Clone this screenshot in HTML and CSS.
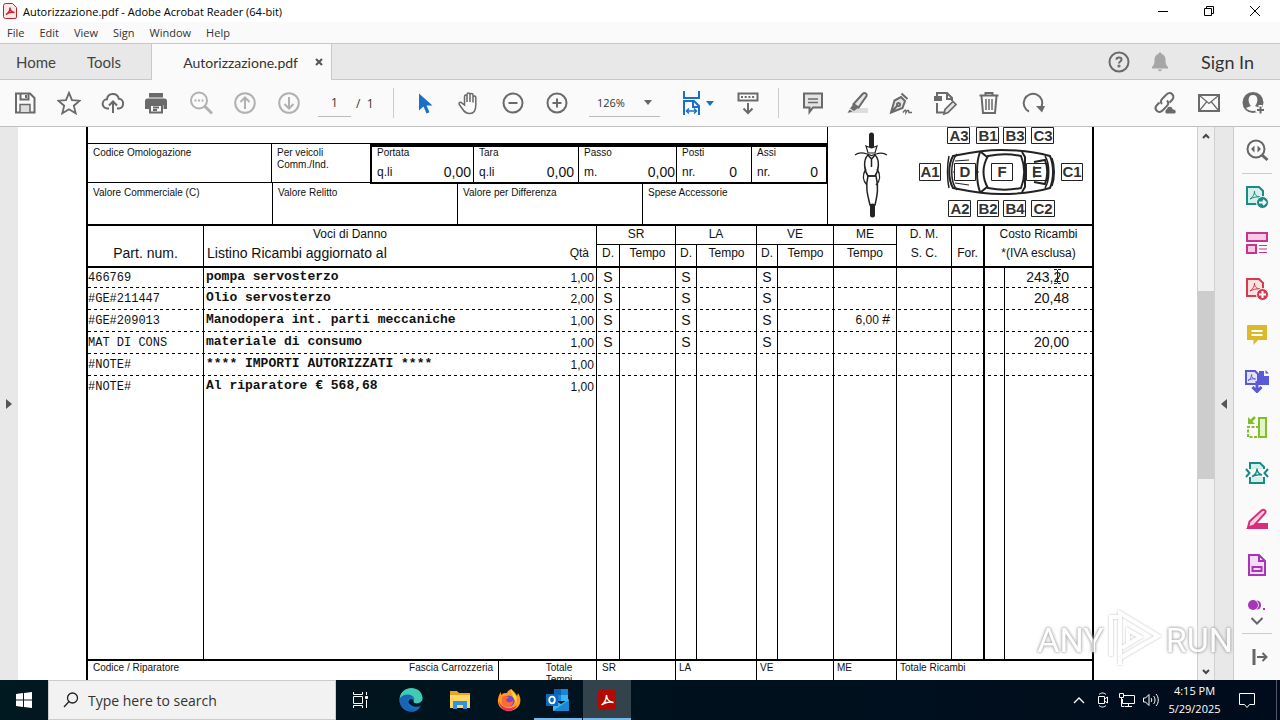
FILE: index.html
```html
<!DOCTYPE html>
<html lang="en">
  <head>
    <meta charset="UTF-8" />
    <meta name="viewport" content="width=device-width, initial-scale=1.0" />
    <title>Autorizzazione.pdf - Adobe Acrobat Reader (64-bit)</title>
    <link rel="stylesheet" href="styles.css">
  </head>
  <body>
    <!-- Title bar -->
    <header class="titlebar">
      <svg class="app-icon" width="14" height="16" viewBox="0 0 14 16"><path d="M2.500.500h7l4 4v9.500a1.500 1.500 0 0 1-1.500 1.500h-9.500a2 2 0 0 1-2-2v-11a2 2 0 0 1 2-2z" fill="#fbe9e9" stroke="#c4232b"/><path d="M3 11.500c2-1 4-4 4-7M7 5c0 2.500 2 4 4.500 4.500M3 11.500c2.500-2.500 5.500-2.700 8.500-2" fill="none" stroke="#d2232a" stroke-width="1.500"/></svg>
      <h1 class="title">Autorizzazione.pdf - Adobe Acrobat Reader (64-bit)</h1>
      <div class="window-buttons">
        <button aria-label="Minimize"><svg width="12" height="12"><path d="M1 6.500h10" stroke="#000"/></svg></button>
        <button aria-label="Restore"><svg width="12" height="12" fill="none" stroke="#000"><path d="M1.500 3.500h7v7h-7zM3.500 3.500v-2h7v7h-2"/></svg></button>
        <button aria-label="Close"><svg width="12" height="12"><path d="M1 1l10 10M11 1L1 11" stroke="#000"/></svg></button>
      </div>
    </header>

    <!-- Menu -->
    <nav class="menubar">
      <button>File</button>
      <button>Edit</button>
      <button>View</button>
      <button>Sign</button>
      <button>Window</button>
      <button>Help</button>
    </nav>

    <!-- Tabs -->
    <div class="tabs">
      <div class="tabs-home">
        <button>Home</button>
        <button>Tools</button>
      </div>
      <div class="tab-active">
        <span>Autorizzazione.pdf</span>
        <button aria-label="Close tab"><svg width="8" height="8"><path d="M1 1l6 6M7 1L1 7" stroke="#555" stroke-width="2"/></svg></button>
      </div>
      <div class="account">
        <button class="icon-button" aria-label="Help"><svg width="22" height="22" viewBox="0 0 22 22" fill="none" stroke="#6a6a6a" stroke-width="2"><circle cx="11" cy="11" r="9.500"/><path d="M8.500 8.800c0-3 5-3 5 0 0 1.800-2.500 1.700-2.500 3.700"/><circle cx="11" cy="15" r=".6"/></svg></button>
        <button class="icon-button" aria-label="Notifications"><svg width="20" height="22" viewBox="0 0 20 22" fill="#a6a6a6"><path d="M10 1.500c1 0 1.500.6 1.500 1.500 3 .8 4 3 4 6 0 4 .8 5.500 2.500 7v1.500H2V16c1.700-1.500 2.500-3 2.500-7 0-3 1-5.200 4-6 0-.9.500-1.500 1.500-1.500zM7.800 18.500h4.400c-.3 2.200-4.100 2.200-4.400 0z"/></svg></button>
        <button class="sign-in">Sign In</button>
      </div>
    </div>

    <!-- Toolbar -->
    <div class="toolbar">
      <div class="tool-group">
        <button class="tool" aria-label="Save"><svg viewBox="0 0 24 24"><path d="M3 2.500h14l4.500 4.500v14.500H3z"/><path d="M7.500 2.500v6h8v-6M13 4v3"/><path d="M7 21v-7.500h10V21" fill="#ddd" stroke-width="1.500"/></svg></button>
        <button class="tool" aria-label="Star"><svg viewBox="0 0 24 24"><path d="M12 1.800l3 7.300 7.800.6-6 5 1.900 7.600-6.700-4.100-6.700 4.100 1.900-7.600-6-5 7.800-.6z" stroke-width="1.800"/></svg></button>
        <button class="tool" aria-label="Upload"><svg viewBox="0 0 24 24"><path d="M8 17.500H6.500a4.600 4.600 0 0 1-.5-9.200c.5-7 10.500-7.200 11.800-.6 5.800.2 5.800 9.500-.3 9.800H16M12 22v-11M8 14.500l4-4 4 4"/></svg></button>
        <button class="tool" aria-label="Print"><svg viewBox="0 0 24 24" class="solid"><path d="M4 2h14v4.500H4zM2.500 7.500h17A2.500 2.500 0 0 1 22 10v8h-3.500v-4H4v4H0v-8a2.500 2.500 0 0 1 2.500-2.500z"/><path d="M5 14h12v7.500H5z" fill="#fafafa" stroke="#6a6a6a" stroke-width="2"/><path d="M8 16.500h6M8 19h4" stroke="#6a6a6a"/></svg></button>
        <button class="tool disabled" aria-label="Find"><svg viewBox="0 0 24 24"><circle cx="10" cy="9.500" r="8"/><path d="M16 15.500l7 7" stroke-width="3"/><path d="M5.500 9.500h9" stroke-dasharray="2 1.500"/></svg></button>
        <button class="tool disabled" aria-label="Previous page"><svg viewBox="0 0 24 24"><circle cx="12" cy="12" r="9.800"/><path d="M12 18V7M7.500 11L12 6.500l4.500 4.500"/></svg></button>
        <button class="tool disabled" aria-label="Next page"><svg viewBox="0 0 24 24"><circle cx="12" cy="12" r="9.800"/><path d="M12 6v11M7.500 13l4.500 4.500 4.500-4.500"/></svg></button>
      </div>
      <div class="pager">
        <input type="text" value="1" aria-label="Page number" />
        <span>/&nbsp; 1</span>
      </div>
      <div class="tool-group divided">
        <button class="tool" aria-label="Select"><svg viewBox="0 0 24 24"><path d="M6 2.500v17l4.500-4 3 7 3-1.300-3-6.700h6z" fill="#1b6fc9" stroke="none"/></svg></button>
        <button class="tool" aria-label="Hand"><svg class="thin" viewBox="0 0 24 24"><path d="M7.500 14V5.500c0-2 2.500-2 2.500 0V11 3.500c0-2 3-2 3 0V11 4c0-2 3-2 3 0v7.500V6.500c0-2 2.800-2 2.800 0V14c0 5-2 8.500-6 8.500-3.500 0-5.500-1.500-7.300-4.500l-3.200-4.500c-1-1.800 1.200-3 2.700-1.300z"/></svg></button>
        <button class="tool" aria-label="Zoom out"><svg viewBox="0 0 24 24"><circle cx="12" cy="12" r="9.500"/><path d="M7.500 12h9"/></svg></button>
        <button class="tool" aria-label="Zoom in"><svg viewBox="0 0 24 24"><circle cx="12" cy="12" r="9.500"/><path d="M7.500 12h9M12 7.500v9"/></svg></button>
      </div>
      <div class="zoom-box">
        <select aria-label="Zoom level">
          <option>126%</option>
        </select>
        <svg width="8" height="5"><path d="M0 0h8L4 5z" fill="#666"/></svg>
      </div>
      <button class="tool fit" aria-label="Fit width"><svg viewBox="0 0 24 24"><path d="M4 0v7h15V0M4 24V10h10l5 5v9M13 10v6h6" stroke="#1b6fc9"/><path d="M6.500 20h10M9 17.500L6.500 20 9 22.500M14 17.500l2.500 2.500-2.500 2.500" stroke="#1b6fc9" stroke-width="1.500"/></svg><svg class="caret" viewBox="0 0 8 5"><path d="M0 0h8L4 5z" fill="#1b6fc9" stroke="none"/></svg></button>
      <button class="tool keyboard" aria-label="Scroll mode"><svg viewBox="0 0 24 24"><path d="M2.500 2.500h19v7h-19z"/><path d="M5 6h14" stroke-dasharray="2 1.700"/><path d="M12 12v10M7.500 17.500L12 22l4.500-4.500"/></svg></button>
      <div class="tool-group divided annotate">
        <button class="tool" aria-label="Comment"><svg viewBox="0 0 24 24"><path d="M3 2.500h18v14h-9L8.500 21v-4.500H3z" fill="#e4e4e4"/><path d="M7 8h10M7 11.500h10" stroke-width="1.500"/></svg></button>
        <button class="tool" aria-label="Highlight"><svg viewBox="0 0 24 24"><path d="M8 17h15v5H4z" fill="#ddd" stroke="none"/><path d="M18 2.500c2-1.500 4.500.5 3.500 2.500l-8 11.500-5-3.500z" fill="#e4e4e4"/><path d="M8 13.500l5 3.500-4 3-4-2.500zM4.500 18.500l3 2-5 1.500z" fill="#6a6a6a" stroke="none"/></svg></button>
        <button class="tool" aria-label="Sign"><svg viewBox="0 0 24 24"><path d="M12.500 2.500l6 5.500M12 6l4 4-2.500 7L2 21.500l3.500-12zM2 21.500l6.500-7" fill="#e4e4e4"/><circle cx="9.500" cy="13.500" r="1.500"/><path d="M14 21.500c2.500-3.500 3-3 3 0 2-3.500 2.500-2.500 3 0h3" stroke-width="1.500"/></svg></button>
        <button class="tool" aria-label="Edit"><svg viewBox="0 0 24 24"><path d="M4 5V2h10l5 5v3M14 2v6h5M4 12v9.500h7"/><path d="M1 5h8v5H1z" fill="#6a6a6a" stroke="none"/><path d="M20 10.500l3 3-8 8-4 1.500 1-4.500z" fill="#e4e4e4" stroke-width="1.700"/></svg></button>
        <button class="tool" aria-label="Delete"><svg viewBox="0 0 24 24"><path d="M2.500 4.500h19M8.500 4V2h7v2M4.500 5l1.500 17h12l1.500-17"/><path d="M9 8v11M12 8v11M15 8v11" stroke-width="1.500"/></svg></button>
        <button class="tool" aria-label="Rotate"><svg viewBox="0 0 24 24"><path d="M8 20.500A9.300 9.300 0 1 1 20.500 16"/><path d="M15 15h9l-3 6.500z" fill="#6a6a6a" stroke="none"/></svg></button>
      </div>
      <div class="tool-group share">
        <button class="tool" aria-label="Copy link"><svg viewBox="0 0 24 24"><path d="M9 13c-2-2-1-4 .5-5.500l4-4c4-4 9.500 1.500 5.500 5.500l-2.500 2.500M14 9.500c2 2 1.500 4-.5 6l-4 4c-4 4-9.500-1.500-5.500-5.500L6.500 11.500"/><path d="M13 23a3 3 0 0 1 .5-5c1-4 6-3.500 6.500 0 4 0 4 5 1 5z" fill="#6a6a6a" stroke="#fafafa" stroke-width="1"/></svg></button>
        <button class="tool" aria-label="Send by email"><svg viewBox="0 0 24 24"><path d="M2 4h20v16H2z"/><path d="M2.500 4.500l9.500 8 9.500-8M2.500 19.500L9.500 11M21.500 19.500L14.500 11" stroke-width="1.200"/></svg></button>
        <button class="tool" aria-label="Add people"><svg viewBox="0 0 24 24"><circle cx="12" cy="11.500" r="10.500" fill="#6a6a6a" stroke="none"/><path d="M12 4c6 0 5 8 2 11l5 2c-3 4-11 4-14 0l5-2c-3-3-4-11 2-11z" fill="#fafafa" stroke="none"/><path d="M19.500 14v10M14.500 19h9.500" stroke="#fafafa" stroke-width="4"/><path d="M19.500 15.500v7M16 19h7"/></svg></button>
      </div>
    </div>

    <main class="viewer">
      <button class="rail rail-left" aria-label="Show navigation pane"><svg width="6" height="10"><path d="M0 0v10l6-5z" fill="#555"/></svg></button>

      <!-- Page -->
      <div class="canvas">
        <div class="sheet">
          <section class="vehicle">
            <div class="vehicle-data">
              <div class="row-blank"></div>
              <div class="row-specs">
                <div class="field omologazione">Codice Omologazione</div>
                <div class="field veicoli">Per veicoli<br>Comm./Ind.</div>
                <div class="specs">
                  <div class="spec portata">Portata<p><span>q.li</span><b>0,00</b></p></div>
                  <div class="spec tara">Tara<p><span>q.li</span><b>0,00</b></p></div>
                  <div class="spec passo">Passo<p><span>m.</span><b>0,00</b></p></div>
                  <div class="spec count">Posti<p><span>nr.</span><b>0</b></p></div>
                  <div class="spec count">Assi<p><span>nr.</span><b>0</b></p></div>
                </div>
              </div>
              <div class="row-values">
                <div class="field">Valore Commerciale (C)</div>
                <div class="field">Valore Relitto</div>
                <div class="field">Valore per Differenza</div>
                <div class="field">Spese Accessorie</div>
              </div>
            </div>
            <svg class="diagram" width="264" height="97" viewBox="828 127 264 97">
              <!-- motorcycle seen from above -->
              <g fill="none" stroke="#222" stroke-width="1.500">
                <path d="M871.500 135v11M872.500 206v9" stroke-width="5" stroke-linecap="round"/>
                <path d="M855 155c4-3 9-2 12-1l4.500 1.500 4.500-1.500c3-1 7-2 11 1M866 146c3 1.500 8 1.500 11 0l-2 7h-7z" stroke-width="1.200"/>
                <path d="M868 155c-5 5-4 15 0 21h7c4-6 5-16 0-21l-3.500 4zM871.500 159v8"/>
                <path d="M866 169c-4 6-3 12 1 16M877 169c4 6 3 12-1 16M868 176c-3 12 0 20 2 29h5c2-9 4-17 1-29z"/>
              </g>
              <!-- car seen from above -->
              <g fill="none" stroke="#222" stroke-width="2">
                <path d="M953 156c15-3 28-6 48-6 22 0 35 2 49 6 4 9 4 23 0 32-14 4-27 6-49 6-20 0-33-3-48-6-5-9-5-23 0-32z"/>
                <path d="M957 154c-7 8-7 28 0 36M949 156c-2 9-2 23 0 32M1045 156c5 8 5 24 0 32M1052 158c3 8 3 20 0 28" stroke-width="1.500"/>
                <path d="M980 152c-4 11-4 29 0 40M988 156c10-2 24-2 33 0 4 10 4 22 0 32-9 2-23 2-33 0-6-10-6-22 0-32zM1022 152l3 5v30l-3 5M981 152l6 5M981 192l6-5M1034 162l11-2c3 8 3 16 0 24l-11-2"/>
                <path d="M955 161l14-1M955 183l14 2M957 172h-4M976 172h3M1034 166v12" stroke-width="1"/>
              </g>
              <g class="zones">
                <g fill="#fff" stroke="#222" stroke-width="1">
                  <path d="M947.500 127.500h22v16h-22zM976.500 127.500h22v16h-22zM1003.500 127.500h22v16h-22zM1031.500 127.500h22v16h-22z"/>
                  <path d="M919.500 163.500h21v17h-21zM1061.500 163.500h21v17h-21zM954.500 163.500h21v17h-21zM991.500 163.500h21v17h-21z"/>
                  <path d="M1026.500 163.500h21v17h-21z" fill="none"/>
                  <path d="M948.500 200.500h22v16h-22zM977.500 200.500h21v16h-21zM1003.500 200.500h22v16h-22zM1031.500 200.500h23v16h-23z"/>
                </g>
                <text x="959" y="141">A3</text>
                <text x="988" y="141">B1</text>
                <text x="1015" y="141">B3</text>
                <text x="1043" y="141">C3</text>
                <text x="930" y="177">A1</text>
                <text x="965" y="177">D</text>
                <text x="1002" y="177">F</text>
                <text x="1037" y="177">E</text>
                <text x="1072" y="177">C1</text>
                <text x="960" y="214">A2</text>
                <text x="988" y="214">B2</text>
                <text x="1015" y="214">B4</text>
                <text x="1043" y="214">C2</text>
              </g>
            </svg>
          </section>

          <table class="damage">
            <colgroup>
              <col class="c-part" /><col /><col class="c-qty" />
              <col class="c-sr-d" /><col class="c-sr-t" /><col class="c-la-d" /><col class="c-la-t" />
              <col class="c-ve-d" /><col class="c-ve-t" /><col class="c-me" />
              <col class="c-dm" /><col class="c-for" /><col class="c-gap" /><col class="c-cost" />
            </colgroup>
            <thead>
              <tr>
                <th></th>
                <th class="line">Voci di Danno</th>
                <th></th>
                <th class="line under" colspan="2">SR</th>
                <th class="line under" colspan="2">LA</th>
                <th class="line under" colspan="2">VE</th>
                <th class="line under">ME</th>
                <th class="line">D. M.</th>
                <th class="line"></th>
                <th class="line thick" colspan="2">Costo Ricambi</th>
              </tr>
              <tr>
                <th class="big">Part. num.</th>
                <th class="line big start">Listino Ricambi aggiornato al</th>
                <th class="qty-head">Qtà</th>
                <th class="line">D.</th>
                <th class="line">Tempo</th>
                <th class="line">D.</th>
                <th class="line">Tempo</th>
                <th class="line">D.</th>
                <th class="line">Tempo</th>
                <th class="line">Tempo</th>
                <th class="line">S. C.</th>
                <th class="line">For.</th>
                <th class="line thick" colspan="2">*(IVA esclusa)</th>
              </tr>
            </thead>
            <tbody>
              <tr><td>466769</td><td>pompa servosterzo</td><td>1,00</td><td>S</td><td></td><td>S</td><td></td><td>S</td><td></td><td></td><td></td><td></td><td></td><td>243,20</td></tr>
              <tr><td>#GE#211447</td><td>Olio servosterzo</td><td>2,00</td><td>S</td><td></td><td>S</td><td></td><td>S</td><td></td><td></td><td></td><td></td><td></td><td>20,48</td></tr>
              <tr><td>#GE#209013</td><td>Manodopera int. parti meccaniche</td><td>1,00</td><td>S</td><td></td><td>S</td><td></td><td>S</td><td></td><td>6,00 <big>#</big></td><td></td><td></td><td></td><td></td></tr>
              <tr><td>MAT DI CONS</td><td>materiale di consumo</td><td>1,00</td><td>S</td><td></td><td>S</td><td></td><td>S</td><td></td><td></td><td></td><td></td><td></td><td>20,00</td></tr>
              <tr><td>#NOTE#</td><td>**** IMPORTI AUTORIZZATI ****</td><td>1,00</td><td></td><td></td><td></td><td></td><td></td><td></td><td></td><td></td><td></td><td></td><td></td></tr>
              <tr class="last"><td>#NOTE#</td><td>Al riparatore € 568,68</td><td>1,00</td><td></td><td></td><td></td><td></td><td></td><td></td><td></td><td></td><td></td><td></td><td></td></tr>
              <tr class="filler"><td></td><td></td><td></td><td></td><td></td><td></td><td></td><td></td><td></td><td></td><td></td><td></td><td></td><td></td></tr>
            </tbody>
          </table>

          <section class="totals">
            <div class="total shop"><span>Codice / Riparatore</span><span>Fascia Carrozzeria</span></div>
            <div class="total hours">Totale<br>Tempi</div>
            <div class="total t-sr">SR</div>
            <div class="total t-la">LA</div>
            <div class="total t-ve">VE</div>
            <div class="total t-me">ME</div>
            <div class="total t-parts">Totale Ricambi</div>
          </section>
        </div>
        <svg class="text-cursor" width="9" height="17" fill="none" stroke="#222"><path d="M1 1.500h3M5 1.500h3M4.500 2v13M1 15.500h3M5 15.500h3M3 10.500h3"/></svg>
      </div>

      <div class="scrollbar">
        <button aria-label="Scroll up"><svg width="8" height="6"><path d="M1 5l3-3 3 3" fill="none" stroke="#444" stroke-width="2"/></svg></button>
        <div class="track"><div class="thumb"></div></div>
        <button aria-label="Scroll down"><svg width="8" height="6"><path d="M1 1l3 3 3-3" fill="none" stroke="#444" stroke-width="2"/></svg></button>
      </div>
      <button class="rail rail-right" aria-label="Hide tools pane"><svg width="6" height="10"><path d="M6 0v10L0 5z" fill="#555"/></svg></button>

      <!-- Tools pane -->
      <aside class="side-tools">
        <button aria-label="Search tools"><svg viewBox="0 0 24 24" fill="none" stroke="#666" stroke-width="2"><circle cx="11" cy="11" r="8.500"/><path d="M17 17l5.500 5" stroke-width="3"/><path d="M9.500 7.500v7L6 11zM12.500 7.500v7L16 11z" fill="#666" stroke="none"/></svg></button>
        <hr />
        <button aria-label="Export PDF"><svg viewBox="0 0 24 24" fill="none" stroke="#1b8a82" stroke-width="2"><path d="M2 2h12l4 4v13H2z" fill="#d5f0ec"/><path d="M5 14c3-1.500 4.500-5 4.500-8 0 4 2 5.500 5.500 6-4-.5-7 .5-10 2z" stroke-width="1"/><circle cx="17.500" cy="17.500" r="6" fill="#1b8a82" stroke="#fafafa" stroke-width="1"/><path d="M14 17.500h6M18 15l2.500 2.500L18 20" stroke="#fff" stroke-width="1.800"/></svg></button>
        <button aria-label="Organize pages"><svg viewBox="0 0 24 24" fill="#f7cbe4" stroke="#c9338f" stroke-width="2"><path d="M2 2h20v8H2zM2 14h9v8H2z"/><path d="M14 14.500h8M14 18h8M14 21.500h8" stroke-width="1.200"/></svg></button>
        <button aria-label="Create PDF"><svg viewBox="0 0 24 24" fill="none" stroke="#d23c4e" stroke-width="2"><path d="M2 2h12l4 4v13H2z" fill="#fde0e0"/><path d="M5 14c3-1.500 4.500-5 4.500-8 0 4 2 5.500 5.500 6-4-.5-7 .5-10 2z" stroke-width="1"/><circle cx="17.500" cy="17.500" r="6" fill="#d23c4e" stroke="#fafafa" stroke-width="1"/><path d="M14 17.500h7M17.500 14v7" stroke="#fff"/></svg></button>
        <button aria-label="Comment"><svg viewBox="0 0 24 24"><path d="M3 2h18a1 1 0 0 1 1 1v14H13l-4.500 5v-5H2V3a1 1 0 0 1 1-1z" fill="#dbb929"/><path d="M6.500 8h11M6.500 12h11" stroke="#fff" stroke-width="2"/></svg></button>
        <button aria-label="Combine files"><svg viewBox="0 0 24 24" fill="none" stroke="#5a5ad6" stroke-width="2"><path d="M1 2h9l3 3v10H1z" fill="#e2e2ff"/><path d="M3 11.500c2-1 3.500-3 3.500-6 0 3 1 4 4 4.500-3-.5-5 0-7.500 1.500z" stroke-width="1"/><path d="M14 2h5v5h5v9H14zM20.500 1l3.500 3.500h-3.500z" fill="#5a5ad6" stroke="none"/><path d="M12 12v10M7.500 18l4.500 4.500 4.500-4.500" stroke-width="3"/></svg></button>
        <button aria-label="Compress pages"><svg viewBox="0 0 24 24" fill="none" stroke="#7fbf2a" stroke-width="2"><path d="M14 3h7v19h-7z" fill="#e3f5c8"/><path d="M14 12H3v10h11" stroke-dasharray="3 1.500"/><path d="M10 2L5 7" stroke-width="2.500"/><path d="M3 2v7h7z" fill="#7fbf2a" stroke="none"/></svg></button>
        <button aria-label="Compress PDF"><svg viewBox="0 0 24 24" fill="none" stroke="#1b8a82" stroke-width="2"><path d="M5 8V2h10l4 4v2M5 16v6h14v-6" fill="#d5f0ec"/><path d="M1 8l3.500 4L1 16M23 8l-3.500 4 3.500 4"/><path d="M7 15.500c3-1.500 5-4 5-8 0 4 2 5.500 5 6.500-4-.8-7 0-10 1.500z" stroke-width="1.500"/></svg></button>
        <button aria-label="Redact"><svg viewBox="0 0 24 24"><path d="M9 16h14v6H1z" fill="#d92d7b"/><path d="M16.500 3.500c2.500-2 5 .5 3.500 2.700L9 18.500l-6 2 1.500-6z" fill="#fbd0e4" stroke="#d92d7b" stroke-width="2"/></svg></button>
        <button aria-label="Fill and sign"><svg viewBox="0 0 24 24" fill="#f6dcf8" stroke="#a735b8" stroke-width="2"><path d="M4 2h10l6 6v14H4zM14 2v6h6M7.500 14h9v4h-9z"/></svg></button>
        <button class="cut" aria-label="More tools"><svg viewBox="0 0 24 24" fill="#a735b8"><circle cx="8" cy="7" r="5"/><path d="M11.500 2.500c6-1 6 10 0 9 3-2 3-7 0-9zM18 10h2v2h-2z"/></svg></button>
        <button class="more" aria-label="Scroll tools"><svg viewBox="0 0 24 24" fill="none" stroke="#666" stroke-width="2"><path d="M6.500 8l5.500 5.500L17.500 8"/></svg></button>
        <hr />
        <button aria-label="Expand pane"><svg class="pane-icon" viewBox="0 0 24 24" fill="none" stroke="#666" stroke-width="2"><path d="M9 4v16" stroke-width="3"/><path d="M12 12h9M17.500 8l4 4-4 4"/></svg></button>
      </aside>

      <div class="watermark"><span>ANY</span><svg width="58" height="64" viewBox="0 0 58 64" fill="none" stroke="#fff" stroke-width="4"><path d="M5 48V9h7M14 48V5l38 23-38 22v7M22 37V22l12 7-18 11"/></svg><span>RUN</span></div>
    </main>

    <!-- Taskbar -->
    <footer class="taskbar">
      <button class="start" aria-label="Start"><svg width="16" height="16" fill="#fff"><path d="M0 2l7-1v6.500H0zM8 1l8-1v7.500H8zM0 8.500h7V15l-7-1zM8 8.500h8V16l-8-1z"/></svg></button>
      <label class="search">
        <svg width="16" height="16" fill="none" stroke="#222" stroke-width="1.300"><circle cx="9.500" cy="6" r="5"/><path d="M6 9.500L1 15"/></svg>
        <input type="text" placeholder="Type here to search" aria-label="Search" />
      </label>
      <div class="apps">
        <button class="task-view" aria-label="Task view"><svg width="18" height="18" fill="none" stroke="#fff"><path d="M2.500 5.500h9v7h-9zM2.500 1v2.500h9V1M2.500 17v-2.500h9V17M15.500 1v3M15.500 9v8"/><path d="M14.500 5.500h2v2h-2z" fill="#fff"/></svg></button>
        <button aria-label="Edge"><svg width="24" height="24" viewBox="0 0 24 24"><circle cx="12" cy="12" r="11.500" fill="#1672c4"/><path d="M.6 11C2-4 23-3 23.500 10c0 6-8 7-9 4 2-3 0-7-5-7C5 7 2 8.500.6 11z" fill="#41cbb5"/><path d="M.6 11c3-6 13-6 14 0 0-2-5-3-6 1-1 7 5 11 12 8-3 4-9 4.500-12 2.500C3 21 0 16 .6 11z" fill="#1a64b4"/><path d="M14.500 14c2 3 9 1 9-3 .5 3 0 5-1 6.500-5 2.500-11 1-13-3-.5-4 5-5 5-.5z" fill="#041820"/></svg></button>
        <button aria-label="File Explorer"><svg width="22" height="20" viewBox="0 0 22 20"><path d="M1 1h7l2 2h11v15H1z" fill="#e9a51e"/><path d="M1 5h20v13H1z" fill="#ffd766"/><path d="M4 19v-8h14v8h-4v-4H8v4z" fill="#2d93dc"/></svg></button>
        <button aria-label="Firefox"><svg width="24" height="24" viewBox="0 0 24 24"><path d="M14 1c3 2 5 5 6 7l1-3c6 9 0 18-9 18C4 23 0 17 1 11c.5-3 2-6 3-7v3c2-2 4-2 6-2 0-1 2-3 4-4z" fill="#ff9824"/><path d="M2 13c2 7 11 10 18 4-2 4-5 6-8 6-6 0-10-5-10-10z" fill="#ed2b63"/><circle cx="12" cy="13" r="5.500" fill="#7944d0"/><path d="M5 9c3-2 6-1 7 1-4 0-3 4-1 4 3 1 5-1 5-2 1 8-9 9-11 3z" fill="#ff6b2e"/><path d="M14 1c2 4 8 7 5 15 0-5-5-7-5-15z" fill="#ffd83d"/></svg></button>
        <button class="open" aria-label="Outlook"><svg width="24" height="24" viewBox="0 0 24 24"><path d="M8 1h14v12H8z" fill="#1784d8"/><path d="M8 1h7v6H8z" fill="#0a62b0"/><path d="M15 7h7v6h-7z" fill="#35b8f1"/><path d="M7 11l8 5 8-5v12H7z" fill="#43b8ee"/><path d="M7 23l16-11v11z" fill="#1688d5"/><path d="M0 6h12v12H0z" fill="#0c69bb"/><ellipse cx="6" cy="12" rx="2.800" ry="3.300" fill="none" stroke="#fff" stroke-width="1.800"/></svg></button>
        <button class="open current" aria-label="Acrobat Reader"><svg width="18" height="20" viewBox="0 0 18 20"><rect width="18" height="20" rx="2" fill="#b30b00"/><path d="M3.500 15c3-2 5-6 5-10 0 4 3 7 7 7.500-4-1-8-.3-12 2.500z" fill="none" stroke="#fff" stroke-width="1.500"/></svg></button>
      </div>
      <div class="tray">
        <button aria-label="Show hidden icons"><svg width="12" height="8" fill="none" stroke="#fff" stroke-width="1.300"><path d="M1 7l5-5 5 5"/></svg></button>
        <button aria-label="Meet now"><svg width="14" height="16" fill="none" stroke="#fff"><path d="M3 2.500c2-2 5-2 7 0M3 13.500c2 2 5 2 7 0M2.500 4.500h6v7h-6zM8.500 7l3-2v6l-3-2"/></svg></button>
        <button aria-label="Network"><svg width="18" height="16" fill="none" stroke="#fff"><path d="M5 3.500h11.500v8H4.500V7M7 14.500h7M10.500 11.500v3M1.500 1.500h4v4h-4zM3.500 5.500v9h3"/></svg></button>
        <button aria-label="Volume"><svg width="18" height="14" fill="none" stroke="#fff"><path d="M1.500 5h2L7 1.500v11L3.500 9h-2zM9 5c1 1 1 3 0 4M11.500 3c2 2 2 6 0 8M14 1c3 3 3 9 0 12"/></svg></button>
        <div class="clock">4:15 PM<br>5/29/2025</div>
        <button class="notices" aria-label="Action center"><svg width="18" height="16" fill="none" stroke="#fff"><path d="M1.500 1.500h15v11h-5l-2.500 3-2.500-3h-5z"/></svg></button>
        <div class="show-desktop"></div>
      </div>
    </footer>
  </body>
</html>
```

FILE: styles.css
```css
* {
  box-sizing: border-box;
}
body {
  margin: 0;
  height: 100vh;
  display: flex;
  flex-direction: column;
  overflow: hidden;
  font-family: "Open Sans", "Noto Sans", sans-serif;
  font-size: 11px;
  color: #333;
  background: #fff;
}
button {
  display: flex;
  align-items: center;
  justify-content: center;
  flex: none;
  padding: 0;
  border: none;
  background: none;
  color: inherit;
  font: inherit;
}
input,
select {
  border: none;
  background: none;
  color: inherit;
  font: inherit;
  outline: none;
}

/* Title bar and menu */
.titlebar {
  display: flex;
  align-items: center;
  height: 22px;
  padding-left: 3px;
}
.title {
  flex: 1;
  margin: 0 0 0 6px;
  font-size: 11px;
  font-weight: normal;
  color: #000;
}
.window-buttons {
  display: flex;
  padding-right: 2px;
}
.window-buttons button {
  width: 46px;
  height: 21px;
}
.menubar {
  display: flex;
  gap: 15px;
  height: 22px;
  padding: 0 0 1px 7px;
  background: #fafafa;
  border-bottom: 1px solid #c8c8c8;
}

/* Tabs */
.tabs {
  display: flex;
  height: 36px;
  background: #e8e8e8;
  font-family: Lato, sans-serif;
  font-size: 14px;
}
.tabs-home {
  display: flex;
  gap: 31px;
  width: 151px;
  padding-left: 16px;
  font-size: 15px;
  color: #444;
  border-bottom: 1px solid #c8c8c8;
}
.tab-active {
  display: flex;
  align-items: center;
  justify-content: flex-end;
  gap: 17px;
  width: 181px;
  padding-right: 8px;
  background: #fafafa;
  border-left: 1px solid #c8c8c8;
  border-right: 1px solid #c8c8c8;
}
.account {
  flex: 1;
  display: flex;
  align-items: center;
  justify-content: flex-end;
  gap: 20px;
  padding-right: 26px;
  border-bottom: 1px solid #c8c8c8;
}
.sign-in {
  margin-left: 11px;
  font-size: 18px;
}

/* Toolbar */
.toolbar {
  display: flex;
  align-items: center;
  height: 47px;
  padding: 0 5px 0 3px;
  background: #fafafa;
  border-bottom: 1px solid #c0c0c0;
}
.tool-group {
  display: flex;
}
.tool {
  width: 44px;
  height: 30px;
}
.tool svg {
  width: 24px;
  height: 24px;
  fill: none;
  stroke: #6a6a6a;
  stroke-width: 2;
}
.tool svg.solid {
  fill: #6a6a6a;
  stroke: none;
}
.tool svg.thin {
  stroke-width: 1.5;
}
.tool.disabled {
  opacity: 0.5;
}
.pager {
  display: flex;
  align-items: center;
  gap: 5px;
  width: 82px;
  padding-left: 7px;
  font-size: 12px;
}
.pager input {
  width: 33px;
  height: 27px;
  padding: 0;
  text-align: center;
  border-bottom: 1px solid #bbb;
}
.divided {
  padding-left: 9px;
  border-left: 1px solid #ccc;
}
.zoom-box {
  display: flex;
  align-items: center;
  width: 71px;
  height: 27px;
  margin: 0 15px 0 10px;
  padding-right: 8px;
  border-bottom: 1px solid #bbb;
}
.zoom-box select {
  flex: 1;
  padding: 0 0 0 8px;
  appearance: none;
}
.tool svg.caret {
  width: 8px;
  height: 5px;
  margin-left: 2px;
}
.keyboard {
  margin: 0 8px 0 7px;
}
.annotate {
  padding-left: 12px;
}
.share {
  margin-left: auto;
}

/* Viewer */
.viewer {
  flex: 1;
  position: relative;
  display: flex;
  min-height: 0;
}
.rail {
  width: 18px;
  background: #e8e8e8;
}
.canvas {
  flex: 1;
  position: relative;
  overflow: hidden;
  padding: 0 103px 0 68px;
}
.scrollbar {
  display: flex;
  flex-direction: column;
  width: 18px;
  background: #f0f0f0;
  border-left: 1px solid #d0d0d0;
  border-right: 1px solid #d0d0d0;
}
.scrollbar button {
  height: 17px;
}
.track {
  flex: 1;
  padding-top: 147px;
}
.thumb {
  height: 188px;
  background: #cdcdcd;
}
.side-tools {
  width: 47px;
  background: #fafafa;
  border-left: 1px solid #ccc;
}
.side-tools button {
  width: 46px;
  height: 46px;
}
.side-tools svg {
  width: 24px;
  height: 24px;
}
.side-tools hr {
  height: 1px;
  margin: 0 8px;
  border: none;
  background: #ccc;
}
.side-tools .cut {
  height: 22px;
  align-items: flex-start;
  padding-top: 10px;
  overflow: hidden;
}
.side-tools .more {
  height: 23px;
}

/* Form printed on the page */
.sheet {
  font-family: "Liberation Sans", Arial, sans-serif;
  font-size: 10px;
  line-height: 12px;
  color: #111;
  border: 2px solid #000;
  border-width: 0 2px;
}
.vehicle {
  display: flex;
}
.vehicle-data {
  flex: 1;
  border-right: 1px solid #000;
}
.row-blank {
  height: 16px;
}
.row-specs {
  display: flex;
  height: 40px;
  border-top: 1px solid #000;
  border-bottom: 1px solid #000;
}
.row-values {
  display: flex;
  height: 41px;
}
.field {
  padding: 4px 5px;
}
.row-specs .field {
  padding-top: 3px;
}
.field + .field {
  border-left: 1px solid #000;
}
.omologazione {
  flex: 1;
}
.veicoli {
  width: 99px;
}
.row-values .field {
  flex: 1;
}
.specs {
  display: flex;
  margin: 0 -1px -2px 0;
  border: 2px solid #000;
  border-top-width: 3px;
}
.spec {
  padding: 0 4px 0 5px;
}
.spec + .spec {
  border-left: 1px solid #000;
}
.spec p {
  display: flex;
  justify-content: space-between;
  margin: 6px 0 0;
  font-size: 12px;
  line-height: 14px;
}
.spec b {
  font-size: 14px;
  font-weight: normal;
}
.portata {
  width: 101px;
  padding-right: 2px;
}
.tara {
  width: 105px;
}
.passo {
  width: 98px;
  padding-right: 1px;
}
.spec.count {
  width: 75px;
  padding-right: 14px;
}
.spec.count:last-child {
  padding-right: 8px;
}
.diagram {
  flex: none;
}
.zones text {
  font: bold 15px "Liberation Sans", Arial, sans-serif;
  fill: #333;
  text-anchor: middle;
}

/* Damage table */
.damage {
  width: 100%;
  table-layout: fixed;
  border-collapse: separate;
  border-spacing: 0;
  border-top: 2px solid #000;
  border-bottom: 2px solid #000;
  font-size: 12px;
  line-height: 14px;
}
.c-part { width: 115px; }
.c-qty { width: 100px; }
.c-sr-d { width: 23px; }
.c-sr-t { width: 56px; }
.c-la-d { width: 21px; }
.c-la-t { width: 60px; }
.c-ve-d { width: 21px; }
.c-ve-t { width: 56px; }
.c-me { width: 63px; }
.c-dm { width: 55px; }
.c-for { width: 32px; }
.c-gap { width: 21px; }
.c-cost { width: 88px; }
.damage th {
  height: 19px;
  padding: 0 0 3px;
  font-weight: normal;
}
.damage tr + tr th {
  height: 23px;
  padding-bottom: 5px;
  border-bottom: 2px solid #000;
  white-space: nowrap;
}
.damage .line {
  border-left: 1px solid #000;
}
.damage .thick {
  border-left-width: 2px;
}
.damage .under {
  border-bottom: 1px solid #000;
}
.damage .big {
  font-size: 14px;
}
.damage .start {
  padding-left: 3px;
  text-align: left;
}
.damage .qty-head {
  padding-right: 7px;
  text-align: right;
}
.damage td {
  height: 22px;
  padding: 0 0 3px;
  border-left: 1px solid #000;
  font-size: 14px;
  text-align: center;
  white-space: nowrap;
}
.damage tbody tr {
  background: repeating-linear-gradient(90deg, #000 0 3px, transparent 3px 6px) bottom / 100% 1px no-repeat;
}
.damage tbody tr:first-child td {
  height: 20px;
}
.damage td:nth-child(1) {
  padding-bottom: 0;
  border-left: none;
  font: 12px "Liberation Mono", monospace;
  text-align: left;
}
.damage td:nth-child(2) {
  padding-left: 2px;
  font: bold 13px "Liberation Mono", monospace;
  text-align: left;
}
.damage td:nth-child(3) {
  padding: 0 2px 0 0;
  border-left: none;
  font-size: 12px;
  text-align: right;
}
.damage td:nth-child(10) {
  padding-right: 6px;
  font-size: 12px;
  text-align: right;
}
.damage td:nth-child(13) {
  border-left-width: 2px;
}
.damage td:nth-child(14) {
  padding-right: 23px;
  text-align: right;
}
.damage big {
  font-size: 14px;
}
.damage tbody .last,
.damage tbody .filler {
  background: none;
}
.damage .filler td {
  height: 261px;
}

.totals {
  display: flex;
  height: 60px;
}
.total {
  padding: 1px 5px;
}
.total + .total {
  border-left: 1px solid #000;
}
.shop {
  flex: 1;
  display: flex;
  justify-content: space-between;
}
.hours {
  width: 98px;
  padding-left: 28px;
  text-align: center;
}
.t-sr { width: 79px; }
.t-la { width: 81px; }
.t-ve { width: 77px; }
.t-me { width: 63px; }
.t-parts { width: 196px; }
.total.t-la,
.total.t-ve,
.total.t-me,
.total.t-parts {
  padding-left: 3px;
}

/* Over the page */
.text-cursor {
  position: absolute;
  top: 141px;
  right: 135px;
}
.watermark {
  position: absolute;
  right: 47px;
  bottom: 8px;
  display: flex;
  align-items: center;
  gap: 2px;
  font: 34px Roboto, sans-serif;
  color: #fff;
  text-shadow: 0 0 3px #999;
  filter: drop-shadow(0 0 1px #aaa);
  opacity: 0.8;
  pointer-events: none;
}

/* Taskbar */
.taskbar {
  display: flex;
  height: 40px;
  background: linear-gradient(90deg, #001820, #000c1c);
  color: #fff;
}
.start {
  width: 48px;
}
.search {
  display: flex;
  align-items: center;
  width: 288px;
  padding-left: 14px;
  gap: 9px;
  background: #f2f2f2;
  border: 1px solid #ccc;
}
.search input {
  flex: 1;
  padding: 0;
  font-size: 14px;
}
.search input::placeholder {
  color: #333;
}
.apps {
  display: flex;
  gap: 1px;
}
.apps button {
  width: 48px;
}
.apps .task-view {
  margin-right: 2px;
}
.apps .open {
  border-bottom: 2px solid #76b9ed;
  padding-top: 2px;
}
.apps .current {
  background: #33434b;
}
.tray {
  display: flex;
  align-items: center;
  margin-left: auto;
  padding-right: 3px;
  height: 100%;
}
.tray button {
  width: 24px;
  height: 40px;
}
.clock {
  width: 63px;
  line-height: 18px;
  text-align: center;
}
.tray .notices {
  width: 41px;
}
.show-desktop {
  width: 10px;
  height: 100%;
  border-right: 1px solid #556;
}
```
